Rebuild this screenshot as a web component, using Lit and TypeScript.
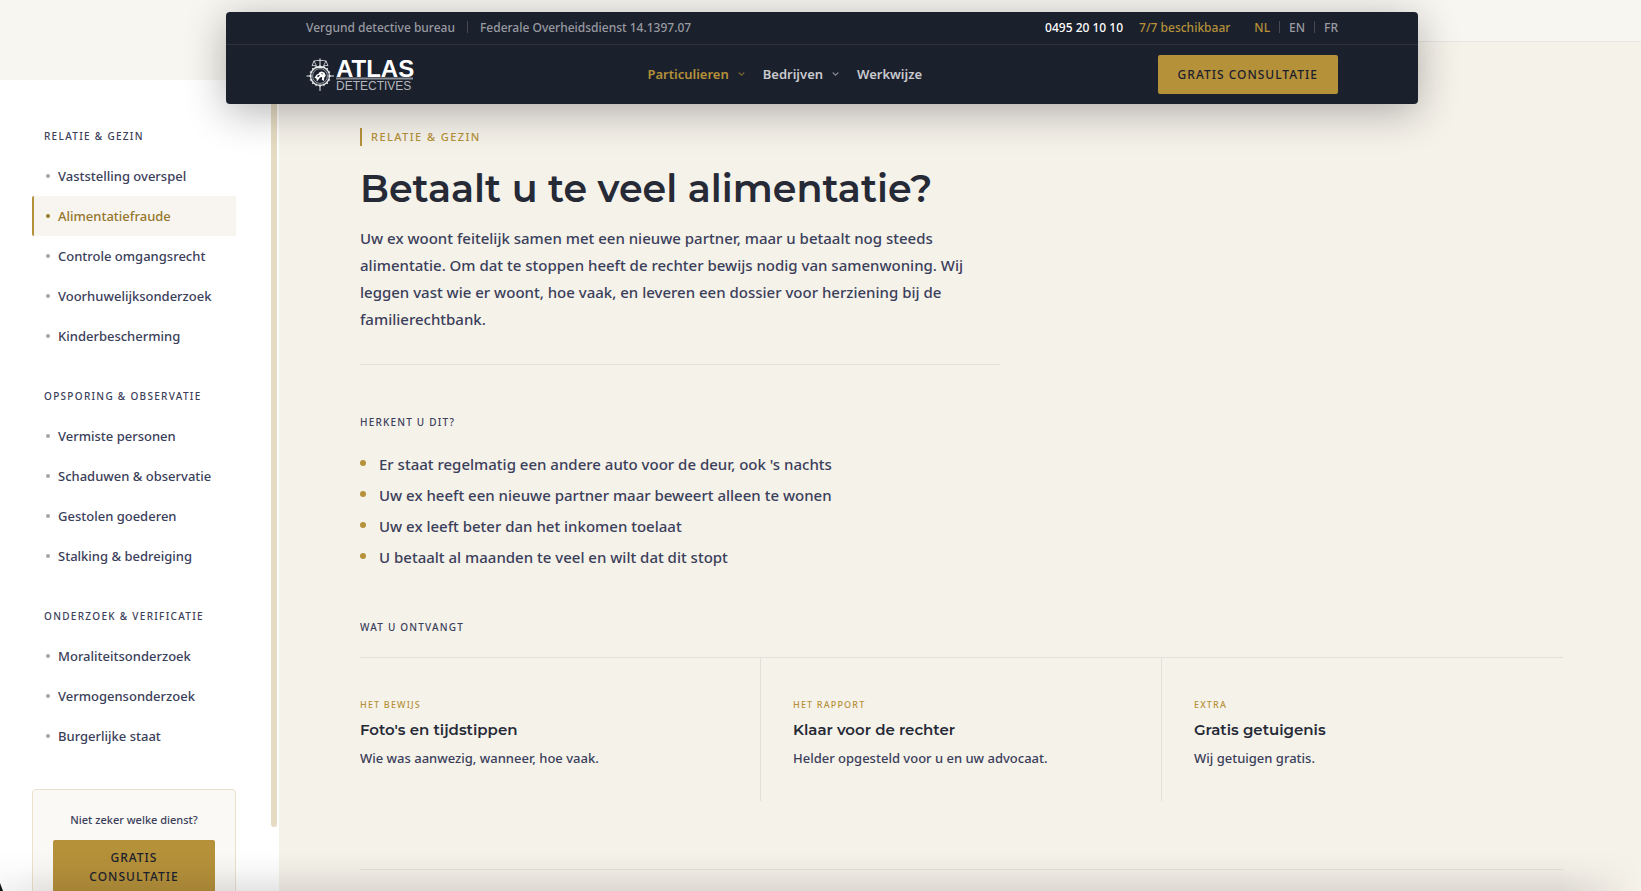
import { LitElement, html, css, svg } from "lit";
import { customElement } from "lit/decorators.js";
import { classMap } from "lit/directives/class-map.js";

interface MenuGroup {
  title: string;
  items: string[];
}

const GROUPS: MenuGroup[] = [
  {
    title: "Relatie & gezin",
    items: ["Vaststelling overspel", "Alimentatiefraude", "Controle omgangsrecht", "Voorhuwelijksonderzoek", "Kinderbescherming"],
  },
  {
    title: "Opsporing & observatie",
    items: ["Vermiste personen", "Schaduwen & observatie", "Gestolen goederen", "Stalking & bedreiging"],
  },
  {
    title: "Onderzoek & verificatie",
    items: ["Moraliteitsonderzoek", "Vermogensonderzoek", "Burgerlijke staat"],
  },
];

const SIGNS = [
  "Er staat regelmatig een andere auto voor de deur, ook 's nachts",
  "Uw ex heeft een nieuwe partner maar beweert alleen te wonen",
  "Uw ex leeft beter dan het inkomen toelaat",
  "U betaalt al maanden te veel en wilt dat dit stopt",
];

const RESULTS = [
  { label: "Het bewijs", title: "Foto's en tijdstippen", text: "Wie was aanwezig, wanneer, hoe vaak." },
  { label: "Het rapport", title: "Klaar voor de rechter", text: "Helder opgesteld voor u en uw advocaat." },
  { label: "Extra", title: "Gratis getuigenis", text: "Wij getuigen gratis." },
];

@customElement("site-logo")
export class SiteLogo extends LitElement {
  static styles = css`
    :host { display: block; }
    svg { display: block; overflow: visible; }
    .name { font: 700 24px "Liberation Sans", Arial, sans-serif; fill: #fff; }
    .sub { font: 400 12px "Liberation Sans", Arial, sans-serif; fill: #b4b8be; }
  `;
  render() {
    const ticks = Array.from({ length: 16 }, (_, i) => i * 22.5);
    return html`
      <svg width="112" height="36" viewBox="0 0 112 36" role="img" aria-label="Atlas Detectives">
        <g fill="none" stroke="#e9eaec">
          <circle cx="14" cy="19" r="9.5" stroke-width="1.3"></circle>
          <circle cx="14" cy="19" r="7.4" stroke-width="0.6"></circle>
          ${ticks.map((a) => svg`<path d="M14 8v2.6" stroke-width="1" transform="rotate(${a} 14 19)"></path>`)}
          <path d="M0.5 19h5M22.5 19h5.5M14 28v6M14 1.5v8" stroke-width="1"></path>
          <path d="M7.5 4.2c3-1.2 10-1.2 13 0M8 4l-2 4.6h4.4zM20 4l-2.4 4.6H22z" stroke-width="0.8"></path>
          <path d="M9.5 10.4h9" stroke-width="1.2"></path>
        </g>
        <path fill="#fff" d="M8.6 20.5l2.2-3 2-1 .8-1.4 2.4-.6 2.6 1.2 1.2 3-1.4 1.8-.6 3.4-2-1.2.4-2.6-2.2.4-2 2.8-1.2 1.2-.2-2.4z"></path>
        <path fill="#1b202d" d="M11.2 18.8l2-1 .6 1-2.2 1.6zM15 16.2l1.8.4-.4 1.2z"></path>
        <text class="name" x="30" y="20">ATLAS</text>
        <path d="M30 21.5h77" stroke="#8b9097" stroke-width="2"></path>
        <text class="sub" x="30" y="33">DETECTIVES</text>
      </svg>
    `;
  }
}

@customElement("site-header")
export class SiteHeader extends LitElement {
  static styles = css`
    :host { display: block; background: #1b202d; border-radius: 4px; box-shadow: 0 8px 40px rgba(24, 18, 24, 0.32); }
    * { box-sizing: border-box; }
    a { color: inherit; text-decoration: none; }
    .top, .main { display: flex; align-items: center; justify-content: space-between; padding: 0 80px; }
    .top { height: 33px; padding-bottom: 2px; border-bottom: 1px solid #2d323e; font-size: 12px; color: #989aa0; }
    .info, .contact, .langs, nav { display: flex; align-items: center; }
    .info { gap: 12px; }
    .contact { gap: 16px; }
    .langs { gap: 9px; margin-left: 8px; }
    .bar { width: 1px; height: 12px; background: #454954; }
    .phone { color: #fff; }
    .gold { color: #b59139; }
    .main { height: 59px; }
    nav { gap: 18px; padding: 0 6px 2px 0; font-size: 13px; font-weight: 600; color: #c9cace; }
    nav a { display: flex; align-items: center; gap: 9px; }
    nav svg { opacity: 0.6; }
    nav .active { color: #b59139; }
    .cta { height: 39px; padding: 0 20px; border: 0; border-radius: 2px; background: #b59139; color: #1b202d; font: 500 12px "Noto Sans", sans-serif; letter-spacing: 1px; text-transform: uppercase; }
  `;
  private chevron() {
    return html`<svg width="7" height="4" viewBox="0 0 7 4" fill="none" stroke="currentColor" stroke-width="1.1" aria-hidden="true"><path d="M.7.5 3.5 3.2 6.3.5"></path></svg>`;
  }
  render() {
    return html`
      <div class="top">
        <div class="info"><span>Vergund detective bureau</span><i class="bar"></i><span>Federale Overheidsdienst 14.1397.07</span></div>
        <div class="contact">
          <a class="phone" href="tel:0495201010">0495 20 10 10</a>
          <span class="gold">7/7 beschikbaar</span>
          <div class="langs"><a class="gold" href="#nl">NL</a><i class="bar"></i><a href="#en">EN</a><i class="bar"></i><a href="#fr">FR</a></div>
        </div>
      </div>
      <div class="main">
        <a href="#"><site-logo></site-logo></a>
        <nav>
          <a class="active" href="#particulieren">Particulieren ${this.chevron()}</a>
          <a href="#bedrijven">Bedrijven ${this.chevron()}</a>
          <a href="#werkwijze">Werkwijze</a>
        </nav>
        <button class="cta">Gratis consultatie</button>
      </div>
    `;
  }
}

@customElement("service-menu")
export class ServiceMenu extends LitElement {
  static styles = css`
    :host { display: flex; flex: 1; background: #fff; padding-right: 2px; }
    * { box-sizing: border-box; }
    .body { flex: 1; padding: 46px 35px 0 32px; }
    .thumb { width: 6px; margin-bottom: 64px; border-radius: 3px; background: #e6dcc3; }
    h2 { margin: 0 0 10px; padding-left: 12px; font-size: 10px; line-height: 20px; font-weight: 500; letter-spacing: 0.13em; text-transform: uppercase; white-space: nowrap; color: #3b405a; }
    ul { list-style: none; margin: 0 0 30px; padding: 0; }
    a { display: flex; align-items: center; gap: 8px; height: 40px; padding-left: 12px; border-left: 2px solid transparent; border-radius: 2px; font-size: 13px; color: #3b405a; text-decoration: none; white-space: nowrap; }
    a::before { content: ""; width: 4px; height: 4px; border-radius: 50%; background: #a4a6a9; }
    a.active { border-left-color: #b59139; background: #f8f5f1; color: #96762a; }
    a.active::before { background: #96762a; }
    .help { margin-top: 33px; padding: 20px; border: 1px solid #ebe1cc; border-radius: 4px; background: #faf9f5; text-align: center; }
    p { margin: 0 0 10px; font-size: 11px; line-height: 20px; color: #3b405a; }
    button { width: 100%; padding: 8px 12px; border: 0; border-radius: 2px; background: #b59139; color: #1b202d; font: 500 12px/19px "Noto Sans", sans-serif; letter-spacing: 1px; text-transform: uppercase; }
  `;
  render() {
    return html`
      <div class="body">
        ${GROUPS.map(
          (g) => html`
            <h2>${g.title}</h2>
            <ul>
              ${g.items.map((t) => html`<li><a class=${classMap({ active: t === "Alimentatiefraude" })} href="#">${t}</a></li>`)}
            </ul>
          `
        )}
        <div class="help">
          <p>Niet zeker welke dienst?</p>
          <button>Gratis consultatie</button>
        </div>
      </div>
      <div class="thumb"></div>
    `;
  }
}

@customElement("app-root")
export class AppRoot extends LitElement {
  static styles = css`
    :host { display: block; position: relative; height: 100vh; overflow: hidden; background: #f7f6f1; color: #3b405a; font-family: "Noto Sans", "Open Sans", sans-serif; font-weight: 500; }
    * { box-sizing: border-box; }
    .header { position: absolute; z-index: 2; top: 12px; left: 0; right: 0; padding-left: 3px; }
    site-header { max-width: 1192px; margin: 0 auto; }
    .page { display: grid; grid-template-columns: 279px 1fr; height: 100%; }
    .side { display: flex; padding-top: 80px; min-height: 0; }
    .content { display: flex; flex-direction: column; min-width: 0; }
    .strip { flex: none; height: 42px; border-bottom: 1px solid #e4e3dd; }
    main { flex: 1; padding: 86px 78px 0 81px; background: #f5f2ea; }
    .intro { max-width: 640px; padding-bottom: 31px; border-bottom: 1px solid #e2dfd8; }
    .eyebrow { padding-left: 9px; border-left: 2px solid #b59139; font-size: 11px; line-height: 18px; letter-spacing: 0.13em; text-transform: uppercase; color: #b59139; margin: 0 0 20px; }
    h1 { margin: 0 0 13px; font: 600 38px/46px Montserrat, Inter, sans-serif; color: #252a36; }
    .lead { margin: 0; font-size: 15px; line-height: 27px; }
    h2 { margin: 47px 0 20px; font-size: 10px; line-height: 20px; font-weight: 500; letter-spacing: 0.12em; text-transform: uppercase; }
    .signs { display: grid; gap: 6px; list-style: none; margin: 0; padding: 0; font-size: 15px; line-height: 25px; }
    .signs li { display: flex; gap: 13px; }
    .signs li::before { content: ""; flex: none; width: 6px; height: 6px; margin-top: 8px; border-radius: 50%; background: #b59139; }
    .results { display: grid; grid-template-columns: repeat(3, 1fr); border-top: 1px solid #e2dfd8; }
    .card { padding: 39px 32px 32px; border-right: 1px solid #e2dfd8; }
    .card:first-child { padding-left: 0; }
    .card:last-child { border-right: 0; }
    .label { margin: 0; font-size: 9px; line-height: 16px; letter-spacing: 0.13em; text-transform: uppercase; color: #b59139; }
    h3 { margin: 5px 0; font: 600 15px/24px Montserrat, Inter, sans-serif; color: #252a36; }
    .text { margin: 0; font-size: 13px; line-height: 22px; }
    .next { margin-top: 68px; border-top: 1px solid #e2dfd8; }
    .fade { position: absolute; z-index: 3; left: 0; right: 0; bottom: 0; height: 40px; background: linear-gradient(to bottom, transparent, rgba(40, 34, 34, 0.03) 45%, rgba(40, 34, 34, 0.12)); mask-image: linear-gradient(to right, #0006, #000 60px, #000 calc(100% - 80px), transparent); pointer-events: none; }
    .corner { position: absolute; z-index: 4; left: 0; bottom: 0; width: 3px; height: 8px; background: #0c1512; clip-path: polygon(0 0, 100% 100%, 0 100%); }
  `;
  render() {
    return html`
      <div class="header"><site-header></site-header></div>
      <div class="page">
        <div class="side"><service-menu></service-menu></div>
        <div class="content">
          <div class="strip"></div>
          <main>
            <section class="intro">
              <p class="eyebrow">Relatie &amp; gezin</p>
              <h1>Betaalt u te veel alimentatie?</h1>
              <p class="lead">Uw ex woont feitelijk samen met een nieuwe partner, maar u betaalt nog steeds alimentatie. Om dat te stoppen heeft de rechter bewijs nodig van samenwoning. Wij leggen vast wie er woont, hoe vaak, en leveren een dossier voor herziening bij de familierechtbank.</p>
            </section>
            <h2>Herkent u dit?</h2>
            <ul class="signs">${SIGNS.map((s) => html`<li>${s}</li>`)}</ul>
            <h2>Wat u ontvangt</h2>
            <div class="results">
              ${RESULTS.map((r) => html`<div class="card"><p class="label">${r.label}</p><h3>${r.title}</h3><p class="text">${r.text}</p></div>`)}
            </div>
            <div class="next"></div>
          </main>
        </div>
      </div>
      <div class="fade"></div>
      <div class="corner"></div>
    `;
  }
}
